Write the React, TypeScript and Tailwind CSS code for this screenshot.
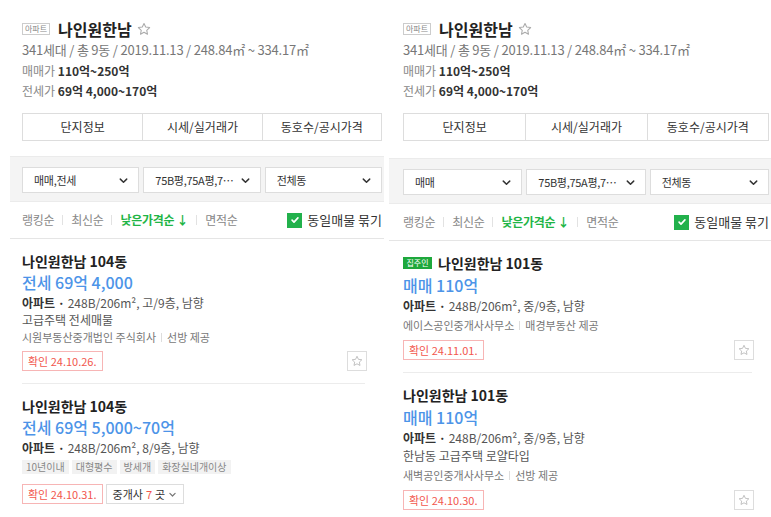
import React from 'react';

type Listing = {
  owner?: boolean;
  title: string;
  price: string;
  floor: string;
  desc?: string;
  tags?: string[];
  agent: string;
  provider: string;
  confirm: string;
  agents?: number;
  star?: boolean;
};

const leftListings: Listing[] = [
  {
    title: '나인원한남 104동',
    price: '전세 69억 4,000',
    floor: '고/9층',
    desc: '고급주택 전세매물',
    agent: '시원부동산중개법인 주식회사',
    provider: '선방 제공',
    confirm: '24.10.26.',
    star: true,
  },
  {
    title: '나인원한남 104동',
    price: '전세 69억 5,000~70억',
    floor: '8/9층',
    tags: ['10년이내', '대형평수', '방세개', '화장실네개이상'],
    agent: '',
    provider: '',
    confirm: '24.10.31.',
    agents: 7,
  },
];

const rightListings: Listing[] = [
  {
    owner: true,
    title: '나인원한남 101동',
    price: '매매 110억',
    floor: '중/9층',
    agent: '에이스공인중개사사무소',
    provider: '매경부동산 제공',
    confirm: '24.11.01.',
    star: true,
  },
  {
    title: '나인원한남 101동',
    price: '매매 110억',
    floor: '중/9층',
    desc: '한남동 고급주택 로얄타입',
    agent: '새벽공인중개사사무소',
    provider: '선방 제공',
    confirm: '24.10.30.',
    star: true,
  },
];

function StarIcon({ size = 12, color = '#aaa' }: { size?: number; color?: string }) {
  return (
    <svg width={size} height={size} viewBox="0 0 24 24" fill="none" stroke={color} strokeWidth="1.8" strokeLinejoin="round">
      <path d="M12 2.5l2.9 6.2 6.8.8-5 4.7 1.3 6.7L12 17.6l-6 3.3 1.3-6.7-5-4.7 6.8-.8z" />
    </svg>
  );
}

function Chevron({ size = 10, color = '#333' }: { size?: number; color?: string }) {
  return (
    <svg width={size} height={size} viewBox="0 0 12 12" fill="none" stroke={color} strokeWidth="1.6" strokeLinecap="round" strokeLinejoin="round">
      <path d="M2.5 4.5L6 8l3.5-3.5" />
    </svg>
  );
}

function ListingItem({ item, loose }: { item: Listing; loose: boolean }) {
  return (
    <div className="mr-[15px] pt-3 pb-3">
      <div className="flex items-center gap-[6px] h-5">
        {item.owner && (
          <span className="h-[12px] w-[29px] bg-[#1ea83c] text-white text-[8px] leading-[12px] text-center">집주인</span>
        )}
        <span className="text-[14px] font-bold text-[#222] leading-5">{item.title}</span>
      </div>
      <div className={`text-[16px] ${loose ? 'leading-[24px]' : 'leading-[23px]'} text-[#4c94e8] font-medium`}>{item.price}</div>
      <div className={`text-[12px] ${loose ? 'leading-[18px]' : 'leading-[17px]'} text-[#555]`}>
        <span className="font-bold text-[#333]">아파트 · </span>248B/206m², {item.floor}, 남향
      </div>
      {item.desc && (
        <div className={`text-[12px] ${loose ? 'leading-[18px]' : 'leading-[17px]'} text-[#555]`}>{item.desc}</div>
      )}
      {item.tags && (
        <div className="flex gap-[3px] mt-1">
          {item.tags.map((t) => (
            <span key={t} className="h-[14px] px-[4px] bg-[#f2f2f2] text-[10px] leading-[14px] text-[#888]">
              {t}
            </span>
          ))}
        </div>
      )}
      {item.agent && (
        <div className={`flex items-center text-[11px] ${loose ? 'leading-[20px]' : 'leading-[18px]'} text-[#777]`}>
          <span>{item.agent}</span>
          <span className="mx-[5px] h-[9px] w-px bg-[#ddd]" />
          <span>{item.provider}</span>
        </div>
      )}
      <div className={`flex items-center justify-between ${item.tags ? 'mt-[10px]' : 'mt-[5px]'}`}>
        <div className="flex gap-[3px]">
          <span className="h-5 px-[5px] border border-[#f7b5b5] text-[11px] leading-[18px] text-[#f2564d]">
            확인 {item.confirm}
          </span>
          {item.agents && (
            <span className="h-5 px-[6px] border border-[#ddd] flex items-center gap-[3px] text-[11px] text-[#333]">
              중개사 <span className="text-[#f2564d]">{item.agents}</span>곳
              <Chevron size={9} color="#777" />
            </span>
          )}
        </div>
        {item.star && (
          <span className="w-5 h-5 border border-[#ddd] flex items-center justify-center">
            <StarIcon size={12} color="#bbb" />
          </span>
        )}
      </div>
    </div>
  );
}

function Panel({
  deal,
  listings,
  wide,
}: {
  deal: string;
  listings: Listing[];
  wide: boolean;
}) {
  const pad = wide ? 'pl-[14px] pr-[2px]' : 'pl-3 pr-[2px]';
  return (
    <div className={`${wide ? 'w-[382px]' : 'w-[374px] ml-[10px]'} h-[517px] overflow-hidden bg-white`}>
      {/* header */}
      <div className={`${pad} pt-[18px]`}>
        <div className="flex items-center h-[22px]">
          <span className="h-[12px] w-[28px] border border-[#ccc] text-[8px] leading-[10px] text-center text-[#888]">아파트</span>
          <span className="ml-2 text-[16px] font-bold text-[#222]">나인원한남</span>
          <span className="ml-[5px]">
            <StarIcon size={14} color="#aaa" />
          </span>
        </div>
        <div className="text-[13px] leading-5 text-[#777] tracking-[-0.2px]">
          341세대 / 총 9동 / 2019.11.13 / 248.84㎡ ~ 334.17㎡
        </div>
        <div className="mt-px text-[12px] leading-5 text-[#888]">
          매매가 <span className="font-bold text-[#333]">110억~250억</span>
        </div>
        <div className="text-[12px] leading-5 text-[#888]">
          전세가 <span className="font-bold text-[#333]">69억 4,000~170억</span>
        </div>
        <div className="mt-3 grid grid-cols-3 h-[28px] border border-[#ddd] text-[12px] text-[#333]">
          <div className="flex items-center justify-center">단지정보</div>
          <div className="flex items-center justify-center border-l border-[#ddd]">시세/실거래가</div>
          <div className="flex items-center justify-center border-l border-[#ddd]">동호수/공시가격</div>
        </div>
      </div>

      {/* filter bar */}
      <div className={`${wide ? 'mt-[17px]' : 'mt-[15px]'} ${pad} bg-[#f4f4f4] border-y border-[#ebebeb] pt-[10px] pb-[8px]`}>
        <div className="flex gap-1">
          {[deal, '75B평,75A평,7…', '전체동'].map((s) => (
            <div
              key={s}
              className="flex-1 min-w-0 h-[26px] bg-white border border-[#ddd] flex items-center justify-between pl-[11px] pr-[9px] text-[11px] text-[#333]"
            >
              <span className="whitespace-nowrap tracking-[-0.3px]">{s}</span>
              <span className="shrink-0 ml-1">
                <Chevron size={11} />
              </span>
            </div>
          ))}
        </div>
      </div>

      {/* sort row */}
      <div className={`${pad} h-[37px] flex items-center justify-between border-b border-[#e5e5e5] text-[12px]`}>
        <div className="flex items-center text-[#888] tracking-[-0.3px]">
          <span>랭킹순</span>
          <span className="mx-[8px] h-[10px] w-px bg-[#e2e2e2]" />
          <span>최신순</span>
          <span className="mx-[8px] h-[10px] w-px bg-[#e2e2e2]" />
          <span className="font-bold text-[#1fb546]">낮은가격순 ↓</span>
          <span className="mx-[8px] h-[10px] w-px bg-[#e2e2e2]" />
          <span>면적순</span>
        </div>
        <div className="flex items-center gap-[5px] whitespace-nowrap">
          <span className="w-[15px] h-[15px] bg-[#22b14c] flex items-center justify-center">
            <svg width="10" height="10" viewBox="0 0 12 12" fill="none" stroke="white" strokeWidth="2" strokeLinecap="round" strokeLinejoin="round">
              <path d="M2.5 6.2l2.3 2.3L9.5 3.5" />
            </svg>
          </span>
          <span className="text-[13px] text-[#333]">동일매물 묶기</span>
        </div>
      </div>

      {/* listings */}
      <div className={pad}>
        {listings.map((l, i) => (
          <div key={i}>
            <ListingItem item={l} loose={wide} />
            {i < listings.length - 1 && <div className="h-px bg-[#ececec] mr-[17px]" />}
          </div>
        ))}
      </div>
    </div>
  );
}

export default function App() {
  return (
    <div className="w-[771px] h-[517px] bg-white flex gap-[5px] overflow-hidden font-['Noto_Sans_CJK_KR','Noto_Sans',sans-serif]">
      <Panel deal="매매,전세" listings={leftListings} wide={false} />
      <Panel deal="매매" listings={rightListings} wide={true} />
    </div>
  );
}
